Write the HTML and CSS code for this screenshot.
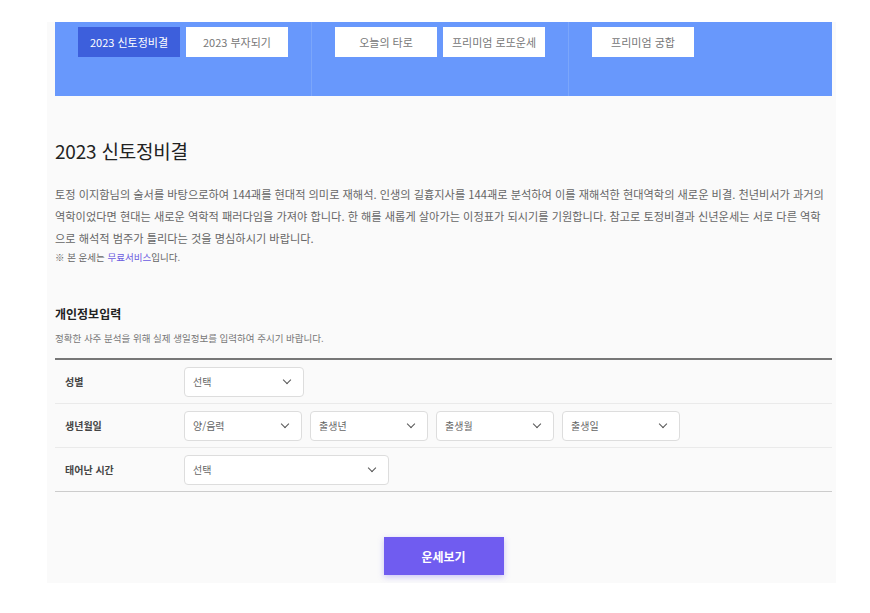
FILE: index.html
```html
<!DOCTYPE html>
<html lang="ko">

<head>
    <meta charset="UTF-8">
    <meta name="viewport" content="width=device-width, initial-scale=1.0">
    <title>2023 신토정비결</title>
    <link rel="stylesheet" href="styles.css">
</head>

<body>
    <div class="page">
        <!-- 상단 메뉴 -->
        <div class="menu-bar">
            <div class="menu-group">
                <a class="menu-tab active">2023 신토정비결</a>
                <a class="menu-tab">2023 부자되기</a>
            </div>
            <div class="menu-group">
                <a class="menu-tab">오늘의 타로</a>
                <a class="menu-tab">프리미엄 로또운세</a>
            </div>
            <div class="menu-group last">
                <a class="menu-tab">프리미엄 궁합</a>
            </div>
        </div>

        <div class="content">
            <h1>2023 신토정비결</h1>
            <p class="intro">토정 이지함님의 술서를 바탕으로하여 144괘를 현대적 의미로 재해석. 인생의 길흉지사를 144괘로 분석하여 이를 재해석한 현대역학의 새로운 비결. 천년비서가 과거의 역학이었다면 현대는 새로운 역학적 패러다임을 가져야 합니다. 한 해를 새롭게 살아가는 이정표가 되시기를 기원합니다. 참고로 토정비결과 신년운세는 서로 다른 역학으로 해석적 범주가 틀리다는 것을 명심하시기 바랍니다.</p>
            <p class="notice">※ 본 운세는 <span class="free">무료서비스</span>입니다.</p>

            <!-- 개인정보입력 -->
            <div class="section-title">개인정보입력</div>
            <div class="section-desc">정확한 사주 분석을 위해 실제 생일정보를 입력하여 주시기 바랍니다.</div>

            <div class="form-table">
                <div class="form-row">
                    <div class="form-label">성별</div>
                    <div class="form-fields">
                        <div class="select w120">선택<span class="arrow"></span></div>
                    </div>
                </div>
                <div class="form-row">
                    <div class="form-label">생년월일</div>
                    <div class="form-fields">
                        <div class="select w118">양/음력<span class="arrow"></span></div>
                        <div class="select w118">출생년<span class="arrow"></span></div>
                        <div class="select w118">출생월<span class="arrow"></span></div>
                        <div class="select w118">출생일<span class="arrow"></span></div>
                    </div>
                </div>
                <div class="form-row">
                    <div class="form-label">태어난 시간</div>
                    <div class="form-fields">
                        <div class="select w205">선택<span class="arrow"></span></div>
                    </div>
                </div>
            </div>

            <button class="submit-button">운세보기</button>
        </div>
    </div>
</body>

</html>
```

FILE: styles.css
```css
body {
    font-family: "Noto Sans CJK KR", "Noto Sans", sans-serif;
    margin: 0;
    background-color: #ffffff;
    color: #333;
}

.page {
    width: 777px;
    margin: 22px 0 0 47px;
    padding: 0 4px 8px 8px;
    background-color: #fafafa;
}

.menu-bar {
    display: flex;
    height: 74px;
    background-color: #6898fc;
}

.menu-group {
    display: flex;
    gap: 6px;
    width: 233px;
    padding: 5px 0 0 23px;
    border-right: 1px solid #7ba6fb;
}

.menu-group.last {
    flex: 1;
    border-right: none;
}

.menu-tab {
    display: block;
    width: 102px;
    height: 30px;
    line-height: 30px;
    text-align: center;
    font-size: 11px;
    color: #777;
    background-color: white;
    cursor: pointer;
}

.menu-tab.active {
    background-color: #3d5fdc;
    color: white;
}

.content {
    padding-top: 41px;
}

h1 {
    margin: 0 0 19px;
    font-size: 19px;
    font-weight: 400;
    color: #222;
    letter-spacing: -0.2px;
}

.intro {
    margin: 0;
    padding-right: 4px;
    font-size: 11.2px;
    line-height: 22px;
    color: #666;
}

.notice {
    margin: 1px 0 0;
    font-size: 9.5px;
    color: #666;
}

.free {
    color: #6b5be0;
}

.section-title {
    margin-top: 41px;
    font-size: 12px;
    font-weight: bold;
    color: #222;
}

.section-desc {
    margin-top: 9px;
    font-size: 9.5px;
    color: #777;
}

.form-table {
    margin-top: 13px;
    border-top: 2px solid #777;
    border-bottom: 1px solid #ccc;
}

.form-row {
    display: flex;
    align-items: center;
    height: 43px;
    border-bottom: 1px solid #eaeaea;
}

.form-row:last-child {
    border-bottom: none;
}

.form-label {
    width: 119px;
    padding-left: 10px;
    font-size: 10px;
    font-weight: bold;
    color: #444;
}

.form-fields {
    display: flex;
    gap: 8px;
}

.select {
    position: relative;
    box-sizing: border-box;
    height: 30px;
    line-height: 28px;
    padding-left: 8px;
    font-size: 10px;
    color: #666;
    background-color: white;
    border: 1px solid #ddd;
    border-radius: 4px;
}

.w120 {
    width: 120px;
}

.w118 {
    width: 118px;
}

.w205 {
    width: 205px;
}

.arrow {
    position: absolute;
    right: 13px;
    top: 9px;
    width: 5px;
    height: 5px;
    border-right: 1.5px solid #555;
    border-bottom: 1.5px solid #555;
    transform: rotate(45deg);
}

.submit-button {
    display: block;
    width: 120px;
    height: 38px;
    margin: 45px auto 0;
    font-family: inherit;
    font-size: 12px;
    font-weight: bold;
    color: white;
    background-color: #705cf0;
    border: none;
    box-shadow: 0 2px 6px rgba(112, 92, 240, 0.35);
    cursor: pointer;
}
```
